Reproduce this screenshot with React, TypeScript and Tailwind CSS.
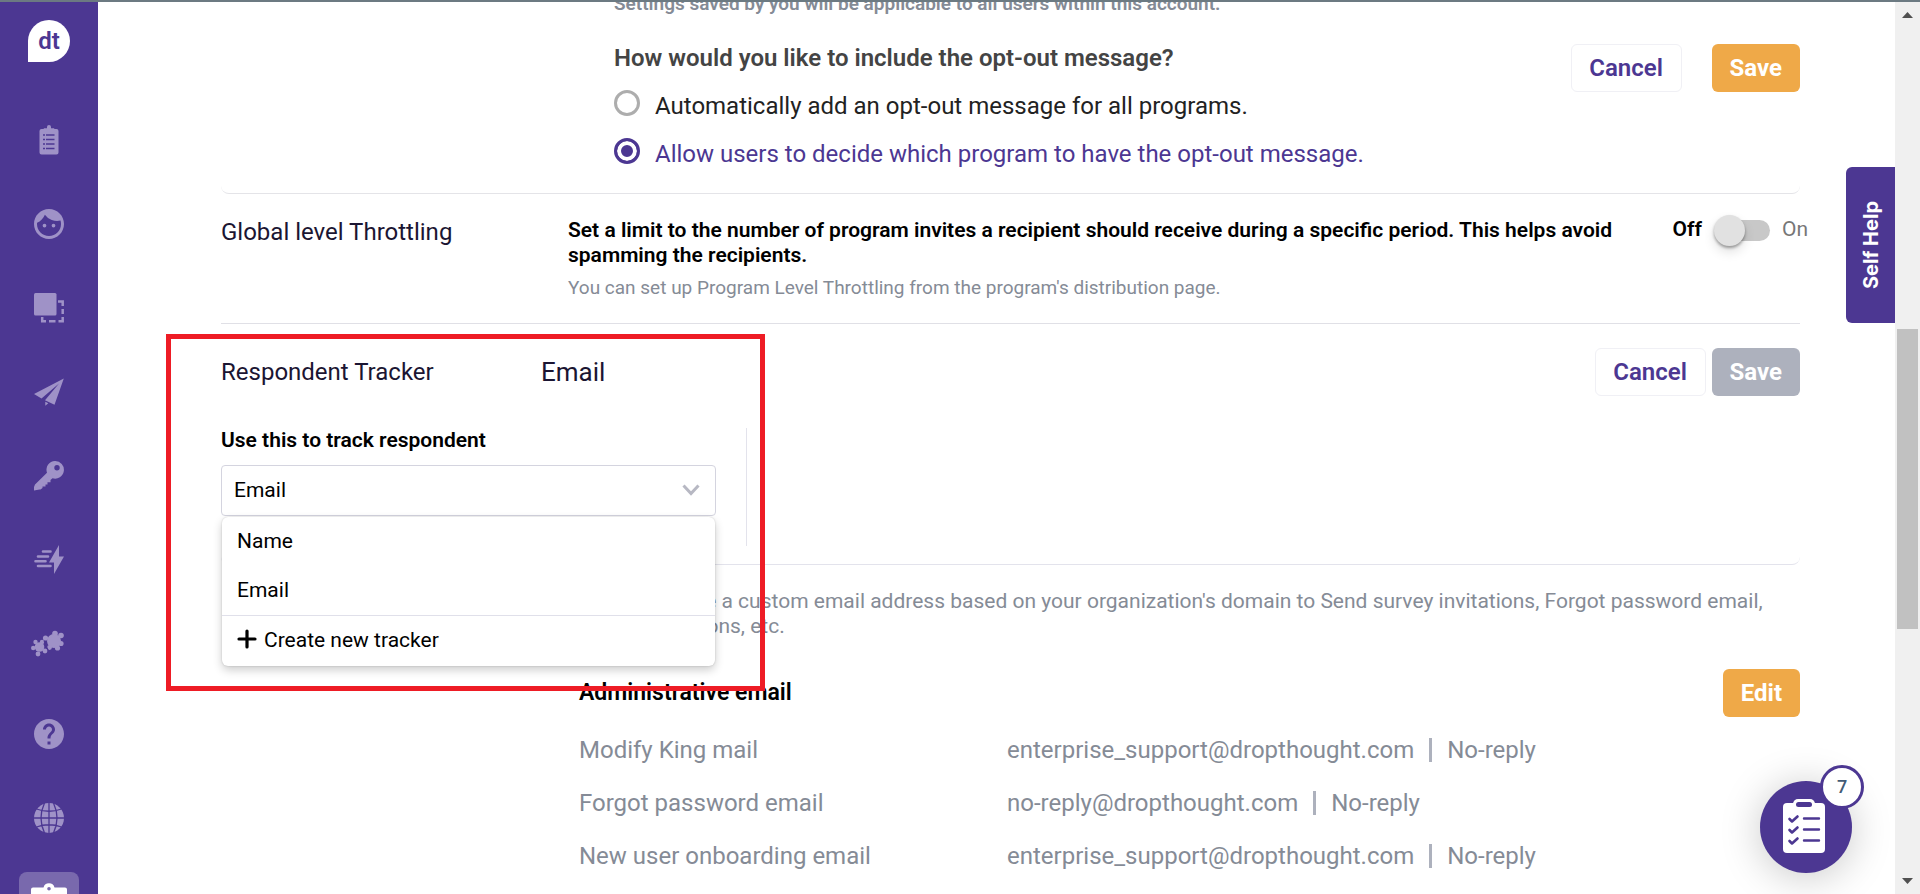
import { useState } from 'react';
import type { ReactNode } from 'react';
import clsx from 'clsx';
import { MdFace, MdHelp } from 'react-icons/md';

function ProgramsIcon() {
  return (
    <svg width="30" height="30" viewBox="0 0 30 30" fill="currentColor">
      <path
        fillRule="evenodd"
        d="M7.5 4H9.5L10 3.2H13V2A2 2 0 0 1 17 2V3.2H20L20.5 4H22.5A2 2 0 0 1 24.5 6V27.5A2 2 0 0 1 22.5 29.5H7.5A2 2 0 0 1 5.500 27.500V6A2 2 0 0 1 7.500 4ZM9 9.200V10.800H11V9.200ZM12 9.200V10.800H20.500V9.200ZM9 13.700V15.300H11V13.700ZM12 13.700V15.300H20.500V13.700ZM9 18.200V19.800H11V18.200ZM12 18.200V19.800H20.500V18.200ZM9 22.700V24.300H11V22.700ZM12 22.700V24.300H20.500V22.700Z"
      />
    </svg>
  );
}

function TemplatesIcon() {
  return (
    <svg width="30" height="30" viewBox="0 0 30 30" fill="none" stroke="currentColor" strokeWidth="2.500">
      <rect x="0" y="0" width="22.500" height="22.500" rx="1.500" fill="currentColor" stroke="none" />
      <path d="M24 8.500H28.700V13M28.700 16V21M28.700 24V28.300H24.500M21.500 28.300H15M12 28.300H8.200V24" />
    </svg>
  );
}

function SendIcon() {
  return (
    <svg width="30" height="30" viewBox="0 0 30 30" fill="currentColor">
      <path d="M29.800 1.500L0 17L7.500 21.500L25 6.500L11 23.200L20.500 27.800ZM11.300 24.800V28.800L14.300 26.300Z" />
    </svg>
  );
}

function KeyIcon() {
  return (
    <svg width="30" height="30" viewBox="0 0 30 30" fill="currentColor">
      <path
        fillRule="evenodd"
        d="M21 0A8.800 8.800 0 1 1 18.500 17.200L16.500 19V21.300H13.500V23.500H11.500V25.500H8.500V27L6.500 28.500H5.500L0 29.500V26L1 23.500L13 11.800A8.800 8.800 0 0 1 21 0ZM23 4A2.700 2.700 0 1 0 23 9.400A2.700 2.700 0 1 0 23 4Z"
      />
    </svg>
  );
}

function TriggersIcon() {
  return (
    <svg width="30" height="30" viewBox="0 0 30 30" fill="currentColor">
      <path d="M25 0V11.500H30L20 29V17.500H15Z" />
      <path
        d="M9 6.500H16.500M4 11.500H14M1.500 16.300H11.500M4 21H16.500"
        stroke="currentColor"
        strokeWidth="2.600"
        strokeLinecap="round"
      />
    </svg>
  );
}

function IntegrationsIcon() {
  return (
    <svg className="mr-[3px]" width="33" height="28" viewBox="0 0 33 28" fill="currentColor">
      {/* Large piece */}
      <circle cx="23" cy="11" r="7" />
      <circle cx="24" cy="3.500" r="2.800" />
      <circle cx="30" cy="5.500" r="2.800" />
      <circle cx="30" cy="13.500" r="2.600" />
      <circle cx="26.500" cy="18" r="2.600" />
      <circle cx="18.500" cy="17.500" r="2.400" />
      <circle cx="14.500" cy="8" r="2.600" />
      {/* Small piece */}
      <circle cx="8.500" cy="17" r="4.800" />
      <circle cx="4.500" cy="12" r="2.200" />
      <circle cx="11" cy="12" r="2.200" />
      <circle cx="2.200" cy="18" r="2.200" />
      <circle cx="7" cy="24" r="2.400" />
      <circle cx="14" cy="21" r="2.400" />
      <path d="M13 11L15.500 13.500V17L17 20" stroke="#4c3792" strokeWidth="1.200" fill="none" />
    </svg>
  );
}

function GlobeIcon() {
  return (
    <svg width="30" height="30" viewBox="0 0 30 30" fill="none">
      <circle cx="15" cy="15" r="15" fill="currentColor" />
      <path
        d="M15 0V30M0 15H30M2.500 6Q15 10.500 27.500 6M2.500 24Q15 19.500 27.500 24M10.500 0Q3.500 15 10.500 30M19.500 0Q26.500 15 19.500 30"
        stroke="#4c3792"
        strokeWidth="1.300"
      />
    </svg>
  );
}

function SettingsCaseIcon() {
  return (
    <svg width="36" height="32" viewBox="0 0 36 32" fill="currentColor">
      <path
        fillRule="evenodd"
        d="M2 4.500H12.500A5.700 5.700 0 0 1 23.500 4.500H34A2 2 0 0 1 36 6.500V30A2 2 0 0 1 34 32H2A2 2 0 0 1 0 30V6.500A2 2 0 0 1 2 4.500ZM18 4A1.800 1.800 0 1 0 18 7.600A1.800 1.800 0 1 0 18 4Z"
      />
    </svg>
  );
}

function ChecklistIcon() {
  return (
    <svg width="42" height="54" viewBox="0 0 42 54" fill="none">
      <rect x="0" y="4" width="42" height="50" rx="4" fill="#fff" />
      <rect x="10" y="0" width="22" height="12" rx="5" fill="#fff" />
      <rect x="13" y="3" width="16" height="5" rx="2.500" fill="#4c3792" />
      <path
        d="M6.500 20L9 22.500L14.500 17.500M6.500 31L9 33.500L14.500 28.500M6.500 42L9 44.500L14.500 39.500"
        stroke="#4c3792"
        strokeWidth="2.600"
        strokeLinecap="round"
        strokeLinejoin="round"
      />
      <path d="M21 19.500H36M21 30.500H36M21 41.500H36" stroke="#4c3792" strokeWidth="2.400" strokeLinecap="round" />
    </svg>
  );
}

const navItems = [
  { label: 'Programs', icon: <ProgramsIcon /> },
  { label: 'Respondents', icon: <MdFace size={36} /> },
  { label: 'Templates', icon: <TemplatesIcon /> },
  { label: 'Distribute', icon: <SendIcon /> },
  { label: 'Access', icon: <KeyIcon /> },
  { label: 'Triggers', icon: <TriggersIcon /> },
  { label: 'Integrations', icon: <IntegrationsIcon /> },
];

const adminEmails = [
  { name: 'Modify King mail', address: 'enterprise_support@dropthought.com', sender: 'No-reply' },
  { name: 'Forgot password email', address: 'no-reply@dropthought.com', sender: 'No-reply' },
  { name: 'New user onboarding email', address: 'enterprise_support@dropthought.com', sender: 'No-reply' },
];

const optOutChoices = [
  { value: 'auto', label: 'Automatically add an opt-out message for all programs.' },
  { value: 'users', label: 'Allow users to decide which program to have the opt-out message.' },
];

function Sidebar() {
  return (
    <nav className="flex w-[98px] shrink-0 flex-col items-center overflow-hidden bg-[#4c3792] text-[#9f92c7]">
      <div className="h-24 shrink-0 pt-[18px]">
        <a
          href="#home"
          className="flex size-[42px] items-center justify-center rounded-full rounded-bl-none bg-white text-2xl font-semibold text-[#4c3792]"
        >
          dt
        </a>
      </div>
      {navItems.map((item) => (
        <a key={item.label} href="#nav" aria-label={item.label} className="flex h-[84px] shrink-0 items-center justify-center">
          {item.icon}
        </a>
      ))}
      <a href="#help" aria-label="Help" className="mt-1.5 flex h-[84px] shrink-0 items-center justify-center">
        <MdHelp size={36} />
      </a>
      <a href="#language" aria-label="Language" className="flex h-[84px] shrink-0 items-center justify-center">
        <GlobeIcon />
      </a>
      <a
        href="#settings"
        aria-label="Account settings"
        className="mt-3 flex h-[60px] w-[60px] shrink-0 justify-center rounded-lg bg-[#7969ad] pt-[11px] text-white"
      >
        <SettingsCaseIcon />
      </a>
    </nav>
  );
}

function CancelButton() {
  return (
    <button className="h-12 w-[111px] rounded-md border border-[#f0f0f5] bg-white text-2xl font-semibold text-[#4c3792]">
      Cancel
    </button>
  );
}

function SolidButton({ children, disabled }: { children: ReactNode; disabled?: boolean }) {
  return (
    <button
      disabled={disabled}
      className={clsx(
        'h-12 rounded-md px-[18px] text-2xl font-bold text-white',
        disabled ? 'bg-[#adb1bd]' : 'bg-[#efa948]'
      )}
    >
      {children}
    </button>
  );
}

function OptOutSection() {
  const [choice, setChoice] = useState('users');

  return (
    <section className="flex justify-between rounded-b-lg border-b border-[#e4e4e8] pb-[15px]">
      <div className="-mt-2.5 pl-[393px]">
        <p className="text-[19px] leading-6 font-semibold text-[#858b96]">
          Settings saved by you will be applicable to all users within this account.
        </p>
        <fieldset className="mt-[26px]">
          <legend className="mb-2 text-2xl leading-8 font-semibold text-[#444]">
            How would you like to include the opt-out message?
          </legend>
          {optOutChoices.map((c) => (
            <label
              key={c.value}
              className={clsx(
                'flex h-12 items-center gap-[15px] text-2xl',
                choice === c.value ? 'text-[#4c3792]' : 'text-[#222]'
              )}
            >
              <input
                type="radio"
                name="opt-out"
                checked={choice === c.value}
                onChange={() => setChoice(c.value)}
                className="mb-1.5 size-[26px] appearance-none rounded-full border-[3px] border-[#adadad] checked:border-[#4c3792] checked:bg-[#4c3792] checked:shadow-[inset_0_0_0_4px_white]"
              />
              {c.label}
            </label>
          ))}
        </fieldset>
      </div>
      <div className="flex gap-[30px] pt-[42px]">
        <CancelButton />
        <SolidButton>Save</SolidButton>
      </div>
    </section>
  );
}

function ThrottlingSection() {
  return (
    <section className="flex border-b border-[#e0e0e6] pt-6 pb-[23px]">
      <h2 className="w-[347px] shrink-0 text-2xl leading-7 text-[#1b1532]">Global level Throttling</h2>
      <div className="max-w-[1060px] grow">
        <p className="text-[21px] leading-[25px] font-semibold text-black">
          Set a limit to the number of program invites a recipient should receive during a specific period. This helps
          avoid spamming the recipients.
        </p>
        <p className="mt-2 text-[19px] leading-6 text-[#858b96]">
          You can set up Program Level Throttling from the program's distribution page.
        </p>
      </div>
      <label className="-mr-2 ml-auto flex h-6 items-center gap-3 text-[21px]">
        <span className="font-semibold text-black">Off</span>
        <span className="relative flex h-[21px] w-14 items-center">
          <input
            type="checkbox"
            role="switch"
            aria-label="Global level throttling"
            className="ml-auto h-[21px] w-[50px] appearance-none rounded-full bg-[#c8c8c8]"
          />
          <span className="absolute left-0 size-[31px] rounded-full bg-[#e1e1e1] shadow-[0_2px_3px_rgba(0,0,0,0.35),0_6px_12px_rgba(0,0,0,0.12)]" />
        </span>
        <span className="text-[#777]">On</span>
      </label>
    </section>
  );
}

function TrackerSection() {
  const [tracker, setTracker] = useState('Email');

  return (
    <section className="relative z-10 rounded-b-lg border-b border-[#e3e3ec] pt-6 pb-[18px]">
      <div className="flex items-center">
        <h2 className="w-80 text-2xl text-[#1b1532]">Respondent Tracker</h2>
        <span className="text-[26px] text-[#1b1532]">{tracker}</span>
        <div className="ml-auto flex gap-1.5">
          <CancelButton />
          <SolidButton disabled>Save</SolidButton>
        </div>
      </div>

      <div className="mt-8 w-[526px] border-r border-[#e3e3ec] pb-[30px]">
        <label htmlFor="tracker" className="block text-[21px] leading-[25px] font-semibold text-black">
          Use this to track respondent
        </label>
        <div className="relative mt-3 w-[495px]">
          <select
            id="tracker"
            value={tracker}
            onChange={(e) => setTracker(e.target.value)}
            className="block h-[51px] w-full appearance-none rounded-sm border border-[#d4d4df] bg-white px-3 text-[21px] text-black"
          >
            <option>Name</option>
            <option>Email</option>
          </select>
          <svg className="pointer-events-none absolute top-[19px] right-4" width="18" height="12" viewBox="0 0 18 12" fill="none">
            <path d="M1.500 1.500L9 9.500L16.500 1.500" stroke="#b7b8c3" strokeWidth="3" />
          </svg>

          {/* Open dropdown */}
          <div className="absolute inset-x-px top-full mt-px rounded-md bg-white text-[21px] text-black shadow-[0_0_2px_rgba(0,0,0,0.18),0_4px_10px_rgba(0,0,0,0.2)]">
            {['Name', 'Email'].map((name) => (
              <button
                key={name}
                onClick={() => setTracker(name)}
                className="flex h-[49px] w-full items-center px-[15px]"
              >
                {name}
              </button>
            ))}
            <button className="flex h-[51px] w-full items-center gap-[7px] border-t border-[#e0e0ea] px-[15px]">
              <svg className="mb-1" width="20" height="20" viewBox="0 0 20 20" fill="none">
                <path d="M10 2V18M2 10H18" stroke="#000" strokeWidth="3.200" strokeLinecap="round" />
              </svg>
              Create new tracker
            </button>
          </div>
        </div>
      </div>

      {/* Callout frame */}
      <div className="pointer-events-none absolute top-2.5 -left-[55px] h-[357px] w-[599px] border-5 border-[#ee1c25]" />
    </section>
  );
}

function EmailSection() {
  return (
    <section className="pt-6 pl-[358px]">
      <p className="text-[21px] leading-[25px] text-[#858b96]">
        You can define a custom email address based on your organization's domain to Send survey invitations, Forgot
        password email, user notifications, etc.
      </p>
      <div className="mt-[30px] flex items-center justify-between">
        <h2 className="text-[23px] font-semibold text-black">Administrative email</h2>
        <SolidButton>Edit</SolidButton>
      </div>
      <table className="mt-1.5 text-left text-2xl text-[#858b96]">
        <tbody>
          {adminEmails.map((row) => (
            <tr key={row.name} className="h-[53px]">
              <th scope="row" className="w-[428px] p-0 font-normal">{row.name}</th>
              <td className="p-0">
                <div className="flex items-center">
                  {row.address}
                  <span className="mx-[15px] h-6 w-[3px] bg-[#adb1bd]" />
                  {row.sender}
                </div>
              </td>
            </tr>
          ))}
        </tbody>
      </table>
    </section>
  );
}

function Scrollbar() {
  return (
    <div className="flex w-[25px] shrink-0 flex-col bg-[#f0f0f0] px-0.5">
      <div className="flex h-[26px] items-center justify-center">
        <svg width="11" height="6" viewBox="0 0 11 6" fill="#505050">
          <path d="M0 6L5.500 0L11 6Z" />
        </svg>
      </div>
      <div className="flex-[301]" />
      <div className="flex-[300] bg-[#c1c1c1]" />
      <div className="flex-[239]" />
      <div className="flex h-[26px] items-center justify-center">
        <svg width="11" height="6" viewBox="0 0 11 6" fill="#505050">
          <path d="M0 0L5.500 6L11 0Z" />
        </svg>
      </div>
    </div>
  );
}

export default function App() {
  return (
    <div className="flex h-screen overflow-hidden border-t-2 border-[#6c7a82] bg-white font-[Roboto,sans-serif]">
      <Sidebar />
      <div className="relative min-w-0 flex-1">
        <main className="h-full overflow-hidden pr-[95px] pl-[123px]">
          <OptOutSection />
          <ThrottlingSection />
          <TrackerSection />
          <EmailSection />
        </main>

        {/* Floating widgets */}
        <button className="absolute top-[165px] right-0 flex h-[156px] w-[49px] items-center justify-center rounded-l-md bg-[#4c3792] font-[Inter,sans-serif] text-xl font-bold text-white">
          <span className="rotate-180 [writing-mode:vertical-rl]">Self Help</span>
        </button>
        <button
          aria-label="Checklist, 7 items"
          className="absolute right-[43px] bottom-[21px] flex size-[92px] items-center justify-center rounded-full bg-[#4c3792] pr-1 pb-0.5 shadow-[0_4px_40px_rgba(0,0,0,0.22)]"
        >
          <ChecklistIcon />
          <span className="absolute -top-4 -right-3 flex size-11 items-center justify-center rounded-full border-3 border-[#4c3792] bg-white text-lg font-medium text-[#425b76]">
            7
          </span>
        </button>
      </div>
      <Scrollbar />
    </div>
  );
}
